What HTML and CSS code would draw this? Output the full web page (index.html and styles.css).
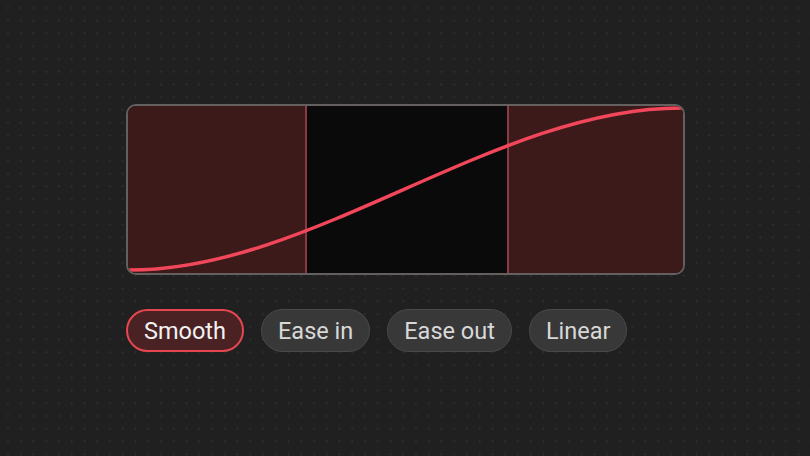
FILE: index.html
```html
<!DOCTYPE html>
<html lang="en">
<head>
<meta charset="UTF-8">
<meta name="viewport" content="width=device-width, initial-scale=1.0">
<title>Easing Picker</title>
<link rel="stylesheet" href="styles.css">
</head>
<body>

<main class="easing">
  <div class="curve-box">
    <div class="zone zone-side"></div>
    <div class="zone zone-mid"></div>
    <div class="zone zone-side"></div>
    <svg class="curve" viewBox="0 0 558 170" preserveAspectRatio="none">
      <path d="M2,167 C186,167 370,2 556,2" fill="none" stroke="#f2475a" stroke-width="3.5" stroke-linecap="round"/>
    </svg>
  </div>

  <div class="presets">
    <button class="preset active">Smooth</button>
    <button class="preset">Ease in</button>
    <button class="preset">Ease out</button>
    <button class="preset">Linear</button>
  </div>
</main>

</body>
</html>
```

FILE: styles.css
```css
* { margin: 0; padding: 0; box-sizing: border-box; }
html, body { height: 100%; }
body { font-family: 'Roboto', 'Open Sans', sans-serif; background-color: #202020; background-image: radial-gradient(circle, #2c2c2c 1px, transparent 1.3px); background-size: 12.75px 12.75px; background-position: 1.6px 1.6px; color: #e6e6e6; }
.easing { padding: 104px 0 0 126px; }
.curve-box { position: relative; width: 559px; height: 171px; border: 2px solid #646060; border-radius: 10px; overflow: hidden; display: flex; }
.zone { height: 100%; }
.zone-side { width: 177px; background-color: #3c1a1a; }
.zone-side:last-of-type { flex: 1; border-left: 2px solid #8c3a42; }
.zone-mid { width: 202px; background-color: #0a0a0a; border-left: 2px solid #8c3a42; }
.curve { position: absolute; top: 0; left: 0; width: 100%; height: 100%; }
.presets { display: flex; gap: 17px; margin-top: 34px; }
.preset { font-family: inherit; font-size: 23.5px; height: 43px; padding: 0 16px; border-radius: 22px; background-color: #383838; border: 1.5px solid #4a4a4a; color: #d8d8d8; cursor: pointer; }
.preset.active { background-color: #4b2224; border: 2px solid #e4474f; color: #f2f2f2; }
```
